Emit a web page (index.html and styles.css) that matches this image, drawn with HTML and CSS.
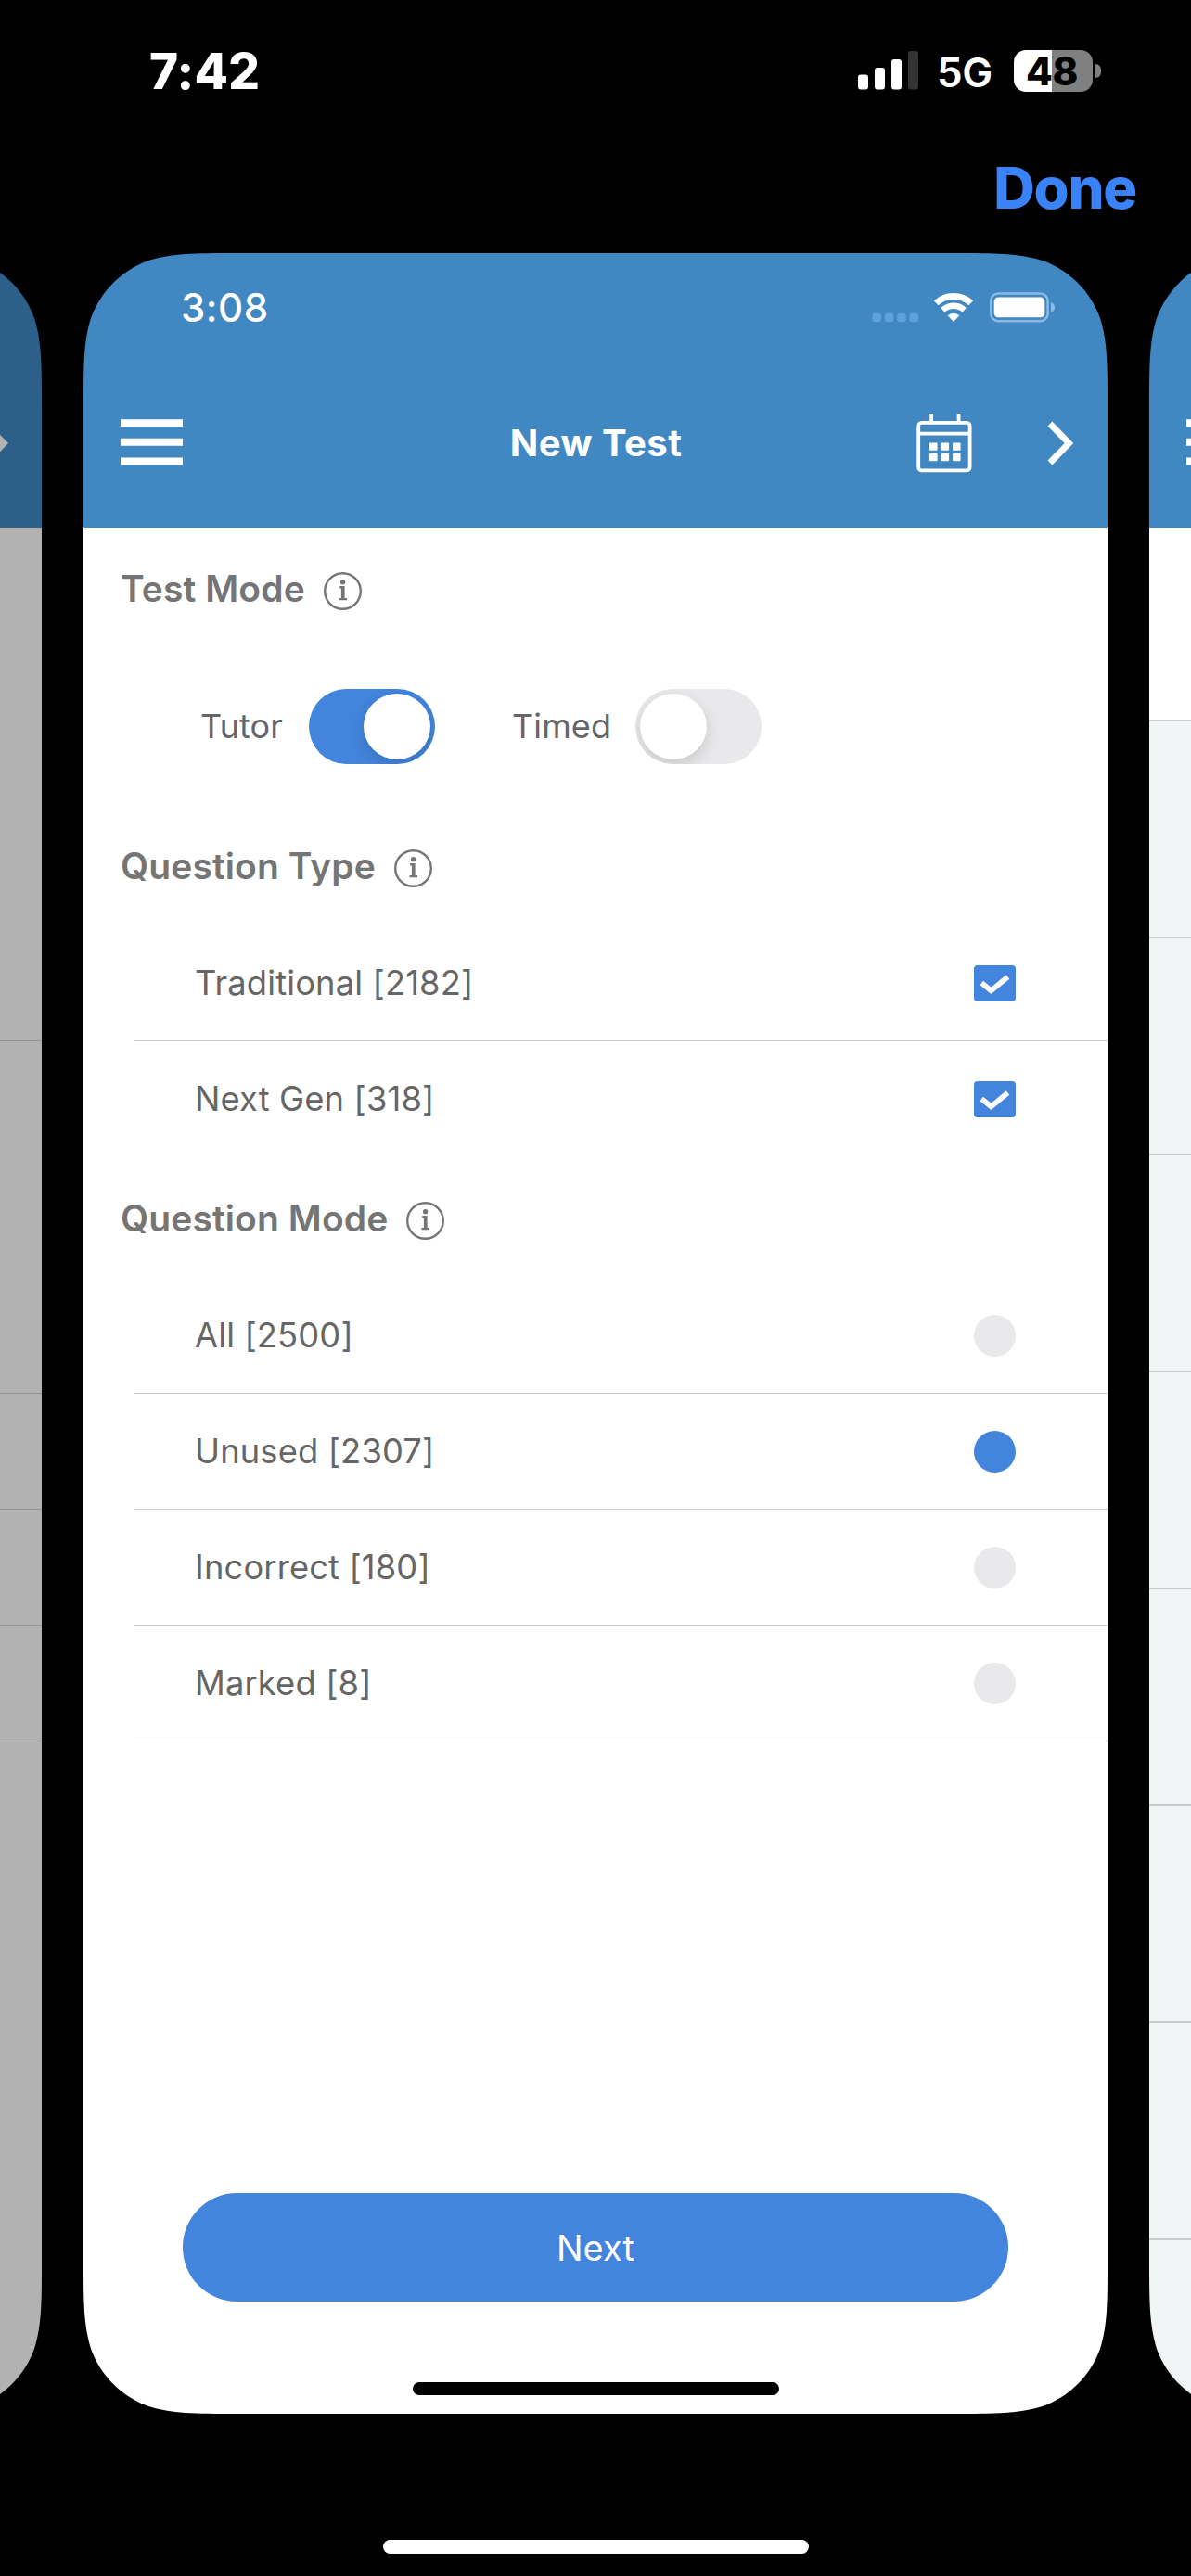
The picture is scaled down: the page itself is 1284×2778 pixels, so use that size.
FILE: index.html
```html
<!DOCTYPE html>
<html lang="en">
<head>
<meta charset="utf-8">
<title>New Test</title>
<link rel="stylesheet" href="styles.css">
</head>
<body>
<svg class="defs" width="0" height="0" aria-hidden="true">
  <symbol id="info" viewBox="0 0 41 41">
    <circle cx="20.5" cy="20.5" r="19.300" fill="none" stroke="currentColor" stroke-width="2.4"/>
    <circle cx="20.6" cy="10.700" r="2.700" fill="currentColor"/>
    <path d="M17.200 15h5.400v12.900h2.500v2.400h-8.600v-2.400h2.400v-10.500h-1.700z" fill="currentColor"/>
  </symbol>
  <symbol id="check" viewBox="0 0 45 39">
    <rect width="45" height="39" rx="4" fill="#4385dc"/>
    <path d="M8.200 19l10.300 8.300L36.500 12.500" fill="none" stroke="#fff" stroke-width="5.600"/>
  </symbol>
</svg>

<header class="status">
  <span class="status-time">7:42</span>
  <div class="status-right">
    <svg class="signal" viewBox="0 0 65 42" width="65" height="42">
      <rect x="0" y="25.500" width="11" height="16" rx="3" fill="#fff"/>
      <rect x="18" y="18" width="11" height="23.500" rx="3" fill="#fff"/>
      <rect x="36" y="9" width="11" height="32.500" rx="3" fill="#fff"/>
      <rect x="54" y="0" width="11" height="41.500" rx="3" fill="#333"/>
    </svg>
    <span class="network">5G</span>
    <span class="battery"><span class="battery-level">48</span></span>
    <span class="battery-nub"></span>
  </div>
</header>
<div class="toolbar"><span class="done">Done</span></div>

<main class="carousel">
  <section class="card card-prev">
    <div class="nav">
      <svg viewBox="19 0 9 48" width="9" height="48">
        <path d="M3 3l20.500 21L3 45" fill="none" stroke="#b2b2b2" stroke-width="6.500"/>
      </svg>
    </div>
    <div class="prev-top"></div>
    <div class="line"></div>
    <div class="prev-gap"></div>
    <div class="line"></div>
    <div class="line"></div>
    <div class="line"></div>
    <div class="line"></div>
  </section>

  <section class="card card-current">
    <div class="app-status">
      <span class="app-time">3:08</span>
      <svg class="app-icons" viewBox="0 0 198 34" width="198" height="34">
        <g fill="#5fa1d9">
          <rect x="0.400" y="22.700" width="9.600" height="9.600" rx="3"/>
          <rect x="13.800" y="22.700" width="9.600" height="9.600" rx="3"/>
          <rect x="27.100" y="22.700" width="9.600" height="9.600" rx="3"/>
          <rect x="40.500" y="22.700" width="9.600" height="9.600" rx="3"/>
        </g>
        <g fill="none" stroke="#fff">
          <path d="M69.200 11.800a27.600 27.600 0 0 1 37.600 0" stroke-width="7"/>
          <path d="M76.300 19.400a17.200 17.200 0 0 1 23.400 0" stroke-width="6.400"/>
        </g>
        <path d="M81.600 25.200a9.300 9.300 0 0 1 12.800 0L88 32z" fill="#fff"/>
        <rect x="128.200" y="1.500" width="61.400" height="29.700" rx="8" fill="none" stroke="#8abbe4" stroke-width="2.400"/>
        <rect x="131.700" y="5.600" width="54.600" height="21.700" rx="4.500" fill="#fff"/>
        <path d="M193 11q4 1.500 4 5.500t-4 5.500z" fill="#8abbe4"/>
      </svg>
    </div>
    <div class="app-nav">
      <svg class="menu" viewBox="0 0 67 50" width="67" height="50">
        <path d="M0 4.300h67M0 24.800h67M0 45.500h67" stroke="#fff" stroke-width="8"/>
      </svg>
      <h1>New Test</h1>
      <div class="nav-actions">
        <svg class="calendar" viewBox="0 0 60 64" width="60" height="64">
          <g fill="none" stroke="#fff" stroke-width="3.800">
            <rect x="2.200" y="9.900" width="55.400" height="51.500" rx="3.500"/>
            <path d="M2 21.700h56M16.200 0v9M45.600 0v9"/>
          </g>
          <g fill="#fff">
            <rect x="14" y="31.500" width="8.600" height="8.200" rx="1"/>
            <rect x="26.500" y="31.500" width="8.600" height="8.200" rx="1"/>
            <rect x="39" y="31.500" width="8.600" height="8.200" rx="1"/>
            <rect x="14" y="43" width="8.600" height="8.200" rx="1"/>
            <rect x="26.500" y="43" width="8.600" height="8.200" rx="1"/>
            <rect x="39" y="43" width="8.600" height="8.200" rx="1"/>
          </g>
        </svg>
        <svg class="chevron" viewBox="0 0 30 48" width="30" height="48">
          <path d="M3 3l20.500 21L3 45" fill="none" stroke="#fff" stroke-width="6.800"/>
        </svg>
      </div>
    </div>

    <h2 class="heading heading-mode"><span>Test Mode</span><svg width="41" height="41"><use href="#info"/></svg></h2>
    <div class="toggles">
      <span class="label tutor">Tutor</span>
      <span class="switch on"><span class="knob"></span></span>
      <span class="label timed">Timed</span>
      <span class="switch"><span class="knob"></span></span>
    </div>

    <h2 class="heading heading-type"><span>Question Type</span><svg width="41" height="41"><use href="#info"/></svg></h2>
    <ul class="list list-type">
      <li><span>Traditional [2182]</span><svg width="45" height="39"><use href="#check"/></svg></li>
      <li><span>Next Gen [318]</span><svg width="45" height="39"><use href="#check"/></svg></li>
    </ul>

    <h2 class="heading heading-qmode"><span>Question Mode</span><svg width="41" height="41"><use href="#info"/></svg></h2>
    <ul class="list">
      <li><span>All [2500]</span><i class="radio"></i></li>
      <li><span>Unused [2307]</span><i class="radio selected"></i></li>
      <li><span>Incorrect [180]</span><i class="radio"></i></li>
      <li><span>Marked [8]</span><i class="radio"></i></li>
    </ul>

    <div class="footer">
      <div class="button">Next</div>
      <div class="app-home"></div>
    </div>
  </section>

  <section class="card card-next">
    <div class="nav">
      <svg viewBox="0 0 5 50" width="5" height="50">
        <path d="M0 4.300h5M0 24.800h5M0 45.500h5" stroke="#fff" stroke-width="8"/>
      </svg>
    </div>
    <div class="next-top"></div>
    <div class="band"></div>
    <div class="band"></div>
    <div class="band"></div>
    <div class="band"></div>
    <div class="band"></div>
    <div class="band"></div>
    <div class="band"></div>
  </section>
</main>
<div class="home"></div>
</body>
</html>
```
FILE: styles.css
```css
* { box-sizing: border-box; margin: 0; padding: 0; }
body {
  width: 1284px;
  height: 2778px;
  overflow: hidden;
  background: #000;
  color: #fff;
  font-family: Inter, "Liberation Sans", sans-serif;
  display: flex;
  flex-direction: column;
}
.defs { position: absolute; }
svg { display: block; flex: none; }
span { white-space: nowrap; }

.status {
  height: 153px;
  padding: 0 97px 0 161px;
  display: flex;
  justify-content: space-between;
  align-items: center;
}
.status-time { font-size: 53px; font-weight: 800; line-height: 60px; letter-spacing: .2px; }
.status-right { display: flex; align-items: center; }
.signal { margin-top: -2px; }
.network { width: 61px; margin: 3px 22px 0 20px; font-size: 44px; font-weight: 600; line-height: 50px; letter-spacing: -.3px; }
.battery {
  width: 85px;
  height: 45px;
  border-radius: 13px;
  background: linear-gradient(90deg, #fff 41px, #808080 41px);
  color: #000;
  display: flex;
  justify-content: center;
  align-items: center;
}
.battery-level { margin-right: 3px; font-size: 42px; font-weight: 800; line-height: 45px; letter-spacing: -.4px; }
.battery-nub { width: 6px; height: 15px; margin-left: 3px; border-radius: 0 6px 6px 0; background: #808080; }

.toolbar { height: 120px; padding-right: 59px; display: flex; justify-content: flex-end; }
.done { margin-top: 10px; color: #3a82f7; font-size: 61.5px; font-weight: 800; line-height: 80px; letter-spacing: -1.2px; }

.carousel { height: 2330px; display: flex; gap: 45px; }
.card { flex: none; height: 2330px; display: flex; flex-direction: column; }
.card-current {
  width: 1104px;
  background: linear-gradient(#4188c3 296px, #fff 296px);
  clip-path: path("M168 0H936C984 0 1008 0 1034.500 8.200C1063 18.600 1085.400 41 1095.800 69.500C1104 95.500 1104 119.700 1104 168V2162C1104 2210 1104 2234.500 1095.800 2260.500C1085.400 2289 1063 2311.400 1034.500 2321.800C1008 2330 984 2330 936 2330H168C120 2330 95.500 2330 69.500 2321.800C41 2311.400 18.600 2289 8.200 2260.500C0 2234.500 0 2210 0 2162V168C0 119.700 0 95.500 8.200 69.500C18.600 41 41 18.600 69.500 8.200C95.500 0 120 0 168 0Z");
}
.nav { height: 296px; display: flex; }

/* The neighbouring pages only peek in by 45px on each side. */
.card-prev {
  width: 45px;
  background: linear-gradient(#2c5f89 296px, #b2b2b2 296px);
  clip-path: path("M-24.500 8.200C4 18.600 26.400 41 36.800 69.500C45 95.500 45 119.700 45 168V2162C45 2210 45 2234.500 36.800 2260.500C26.400 2289 4 2311.400 -24.500 2321.800Z");
}
.card-prev .nav { padding-top: 181px; }
.prev-top { height: 429px; }
.prev-gap { height: 255px; }
.line { height: 125px; border-bottom: 1px solid #939393; }

.card-next {
  width: 45px;
  background: linear-gradient(#4188c3 296px, #fff 296px, #fff 504px, #f1f5f6 504px);
  clip-path: path("M69.500 8.200C41 18.600 18.600 41 8.200 69.500C0 95.500 0 119.700 0 168V2162C0 2210 0 2234.500 8.200 2260.500C18.600 2289 41 2311.400 69.500 2321.800Z");
}
.card-next .nav { padding: 179px 0 0 40px; }
.next-top { height: 209px; border-bottom: 2px solid #cbcdce; }
.band { height: 234px; border-bottom: 2px solid #c9cccd; }

.app-status {
  height: 120px;
  padding: 0 56px 0 105px;
  display: flex;
  justify-content: space-between;
}
.app-time { margin-top: 34px; font-size: 42px; font-weight: 500; line-height: 50px; letter-spacing: .5px; }
.app-icons { margin-top: 42px; }
.app-nav {
  height: 176px;
  padding: 53px 35px 0 40px;
  display: grid;
  grid-template-columns: 1fr auto 1fr;
  align-items: start;
}
.app-nav .menu { margin-top: 6px; }
h1 { margin: 7px 4px 0 0; font-size: 40px; font-weight: 700; line-height: 50px; letter-spacing: .5px; white-space: nowrap; }
.nav-actions { display: flex; justify-content: flex-end; gap: 81px; }
.app-nav .chevron { margin-top: 8px; }

.heading {
  height: 41px;
  padding-left: 40px;
  display: flex;
  align-items: center;
  gap: 20px;
  color: #757575;
  font-size: 39px;
  font-weight: 600;
  line-height: 41px;
  letter-spacing: .1px;
}
.heading span { margin-top: -7px; }
.heading-mode { margin-top: 48px; }
.heading-type { margin-top: 92px; }

.toggles { height: 81px; margin-top: 85px; padding-left: 126px; display: flex; align-items: center; }
.label { margin-top: -2px; color: #666; font-size: 36px; line-height: 50px; letter-spacing: .1px; }
.tutor { width: 117px; }
.timed { width: 133px; margin-left: 83px; }
.switch { width: 136px; height: 81px; padding: 5px; border-radius: 41px; background: #e9e9eb; display: flex; overflow: hidden; }
.switch.on { background: #4385dc; justify-content: flex-end; }
.knob { width: 72px; height: 71px; border-radius: 50%; background: #fff; box-shadow: 0 6px 16px rgba(0, 0, 0, .14); }

.list { list-style: none; margin-left: 54px; }
.list li {
  height: 125px;
  padding: 0 99px 0 66px;
  border-bottom: 1px solid #ccc;
  display: flex;
  justify-content: space-between;
  align-items: center;
  color: #666;
  font-size: 36.3px;
  letter-spacing: .15px;
}
.list-type li:last-child { border-bottom-color: transparent; }
.list-type { margin-top: 41px; }
.heading-qmode { margin-top: 48px; }
.heading-qmode + .list { margin-top: 41px; }
.radio { width: 45px; height: 45px; border-radius: 50%; background: #e9e9eb; }
.radio.selected { background: #4385dc; }

.footer { margin-top: auto; padding-bottom: 20px; display: flex; flex-direction: column; align-items: center; }
.button {
  width: 890px;
  height: 117px;
  border-radius: 59px;
  background: #4385dc;
  font-size: 38px;
  line-height: 118px;
  letter-spacing: .1px;
  text-align: center;
}
.app-home { width: 395px; height: 14px; margin-top: 87px; border-radius: 7px; background: #000; }
.home { align-self: center; width: 459px; height: 15px; margin-top: 136px; border-radius: 8px; background: #fff; }
```
